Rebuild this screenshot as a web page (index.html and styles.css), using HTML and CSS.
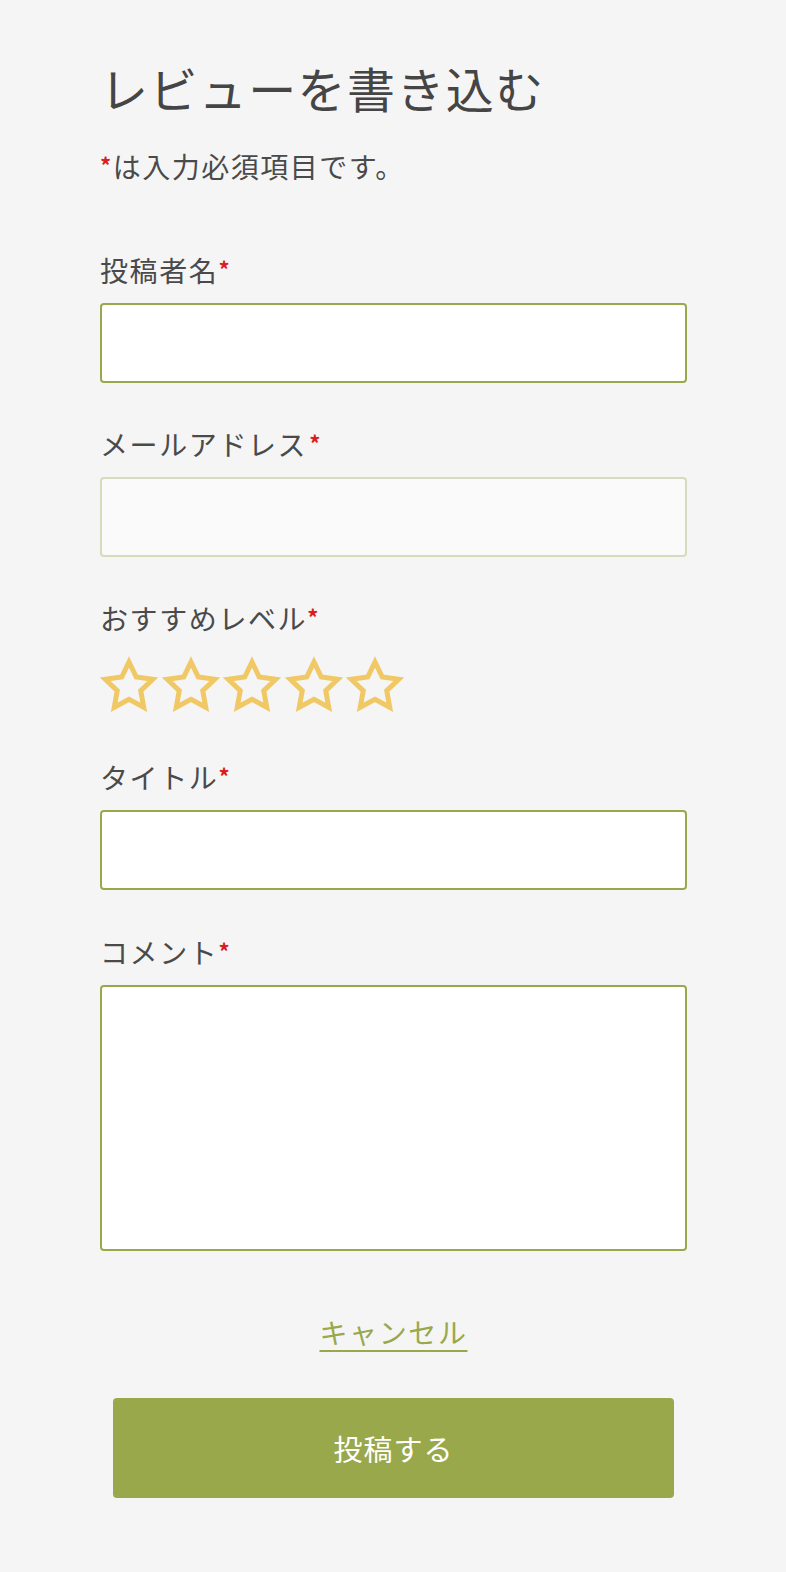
FILE: index.html
```html
<!DOCTYPE html>
<html lang="ja">
<head>
<meta charset="utf-8">
<title>レビューを書き込む</title>
<link rel="stylesheet" href="styles.css">
</head>
<body>
<main class="review">
  <h1 class="review__title">レビューを書き込む</h1>
  <p class="review__note"><span class="req">*</span>は入力必須項目です。</p>

  <form class="form">
    <div class="field">
      <label class="field__label">投稿者名<span class="req">*</span></label>
      <input class="field__input" type="text">
    </div>
    <div class="field">
      <label class="field__label">メールアドレス<span class="req req--spaced">*</span></label>
      <input class="field__input field__input--disabled" type="text" disabled>
    </div>
    <div class="field field--stars">
      <label class="field__label">おすすめレベル<span class="req">*</span></label>
      <div class="stars">
        <svg class="star" viewBox="0 0 24 24"><polygon points="12,2.4 14.9,8.4 21.5,9.3 16.7,13.9 17.9,20.5 12,17.3 6.1,20.5 7.3,13.9 2.5,9.3 9.1,8.4"/></svg>
        <svg class="star" viewBox="0 0 24 24"><polygon points="12,2.4 14.9,8.4 21.5,9.3 16.7,13.9 17.9,20.5 12,17.3 6.1,20.5 7.3,13.9 2.5,9.3 9.1,8.4"/></svg>
        <svg class="star" viewBox="0 0 24 24"><polygon points="12,2.4 14.9,8.4 21.5,9.3 16.7,13.9 17.9,20.5 12,17.3 6.1,20.5 7.3,13.9 2.5,9.3 9.1,8.4"/></svg>
        <svg class="star" viewBox="0 0 24 24"><polygon points="12,2.4 14.9,8.4 21.5,9.3 16.7,13.9 17.9,20.5 12,17.3 6.1,20.5 7.3,13.9 2.5,9.3 9.1,8.4"/></svg>
        <svg class="star" viewBox="0 0 24 24"><polygon points="12,2.4 14.9,8.4 21.5,9.3 16.7,13.9 17.9,20.5 12,17.3 6.1,20.5 7.3,13.9 2.5,9.3 9.1,8.4"/></svg>
      </div>
    </div>
    <div class="field field--title">
      <label class="field__label">タイトル<span class="req">*</span></label>
      <input class="field__input" type="text">
    </div>
    <div class="field">
      <label class="field__label">コメント<span class="req">*</span></label>
      <textarea class="field__input field__textarea"></textarea>
    </div>

    <div class="actions">
      <a class="cancel" href="#">キャンセル</a>
      <button class="submit" type="button">投稿する</button>
    </div>
  </form>
</main>
</body>
</html>
```

FILE: styles.css
```css
* { box-sizing: border-box; }

html, body {
  margin: 0;
  padding: 0;
  background: #f5f5f5;
}

body {
  font-family: "Noto Sans CJK JP", "Noto Sans", sans-serif;
  color: #4a4a4a;
}

.review {
  padding: 51px 99px 40px 100px;
}

.review__title {
  margin: 0;
  font-size: 48px;
  line-height: 72px;
  font-weight: 400;
  letter-spacing: 1.4px;
  color: #454545;
}

.review__note {
  margin: 20px 0 0;
  font-size: 28px;
  line-height: 42px;
  letter-spacing: 1.5px;
}

.req {
  color: #d81e1e;
  font-weight: 700;
  font-size: 22px;
  vertical-align: 4px;
}

.req--spaced {
  margin-left: 2px;
}

.form {
  margin-top: 60px;
  display: flex;
  flex-direction: column;
}

.field {
  display: flex;
  flex-direction: column;
  margin-bottom: 38px;
}

.field__label {
  font-size: 28px;
  line-height: 42px;
  letter-spacing: 1.6px;
  margin-bottom: 12px;
}

.field__input {
  display: block;
  width: 100%;
  height: 80px;
  margin: 0;
  border: 2px solid #9aa84c;
  border-radius: 4px;
  background: #ffffff;
  font: inherit;
  outline: none;
}

.field__input--disabled {
  border-color: #d6dbbb;
  background: #fafafa;
}

.field__textarea {
  height: 266px;
  resize: none;
}

.field--stars {
  margin-bottom: 38px;
}

.field--stars .field__label {
  margin-bottom: 17px;
}

.field--title {
  margin-bottom: 39px;
}

.stars {
  display: flex;
  gap: 1.5px;
  margin-left: -1px;
}

.star {
  width: 60px;
  height: 60px;
  display: block;
}

.star polygon {
  fill: none;
  stroke: #f0c966;
  stroke-width: 2;
  stroke-linejoin: miter;
}

.actions {
  display: flex;
  flex-direction: column;
  align-items: center;
  margin-top: 22px;
}

.cancel {
  font-size: 28px;
  line-height: 42px;
  letter-spacing: 1.6px;
  color: #9aa84c;
  text-decoration: underline;
  text-decoration-thickness: 2px;
  text-underline-offset: 6px;
}

.submit {
  margin-top: 45px;
  align-self: stretch;
  margin-left: 13px;
  margin-right: 13px;
  height: 100px;
  border: none;
  border-radius: 4px;
  background: #9aa84c;
  color: #ffffff;
  font-family: inherit;
  font-size: 29px;
  letter-spacing: 1px;
}
```
